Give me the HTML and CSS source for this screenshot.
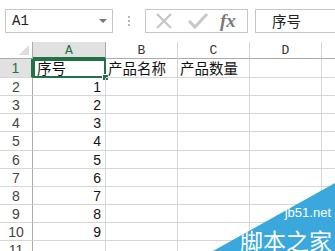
FILE: index.html
```html
<!DOCTYPE html>
<html>
<head>
<meta charset="utf-8">
<link rel="stylesheet" href="styles.css">
</head>
<body>
<div class="app">
  <div class="fbar">
    <div class="namebox"><span class="nb-text">A1</span><span class="nb-arrow"></span></div>
    <div class="dots"><i></i><i></i><i></i></div>
    <div class="btns">
      <svg class="ico" width="20" height="20" viewBox="0 0 20 20"><path d="M3 3 L17 17 M17 3 L3 17" stroke="#c8c8c8" stroke-width="2.4" fill="none"/></svg>
      <svg class="ico" width="22" height="20" viewBox="0 0 22 20"><path d="M2 10 L8 16 L20 3" stroke="#c8c8c8" stroke-width="3" fill="none"/></svg>
      <span class="fx">fx</span>
    </div>
    <div class="input">序号</div>
  </div>
  <div class="sheet">
    <div class="corner"><span class="tri"></span></div>
    <div class="ch sel">A</div>
    <div class="ch">B</div>
    <div class="ch">C</div>
    <div class="ch">D</div>
    <div class="ch last"></div>

    <div class="rh sel">1</div>
    <div class="c active">序号<span class="handle"></span></div>
    <div class="c">产品名称</div>
    <div class="c">产品数量</div>
    <div class="c"></div>
    <div class="c"></div>

    <div class="rh">2</div><div class="c n">1</div><div class="c"></div><div class="c"></div><div class="c"></div><div class="c"></div>
    <div class="rh">3</div><div class="c n">2</div><div class="c"></div><div class="c"></div><div class="c"></div><div class="c"></div>
    <div class="rh">4</div><div class="c n">3</div><div class="c"></div><div class="c"></div><div class="c"></div><div class="c"></div>
    <div class="rh">5</div><div class="c n">4</div><div class="c"></div><div class="c"></div><div class="c"></div><div class="c"></div>
    <div class="rh">6</div><div class="c n">5</div><div class="c"></div><div class="c"></div><div class="c"></div><div class="c"></div>
    <div class="rh">7</div><div class="c n">6</div><div class="c"></div><div class="c"></div><div class="c"></div><div class="c"></div>
    <div class="rh">8</div><div class="c n">7</div><div class="c"></div><div class="c"></div><div class="c"></div><div class="c"></div>
    <div class="rh">9</div><div class="c n">8</div><div class="c"></div><div class="c"></div><div class="c"></div><div class="c"></div>
    <div class="rh">10</div><div class="c n">9</div><div class="c"></div><div class="c"></div><div class="c"></div><div class="c"></div>
    <div class="rh">11</div><div class="c"></div><div class="c"></div><div class="c"></div><div class="c"></div><div class="c"></div>
  </div>
  <div class="wm">
    <div class="wm-url">jb51.net</div>
    <div class="wm-name">脚本之家</div>
  </div>
</div>
</body>
</html>
```
FILE: styles.css
```css
html, body {
  margin: 0;
  padding: 0;
  background: #fff;
  overflow: hidden;
}
.app {
  position: relative;
  width: 335px;
  height: 251px;
  overflow: hidden;
  font-family: "Noto Sans CJK SC", "Liberation Sans", sans-serif;
}
.fbar {
  display: flex;
  align-items: center;
  height: 42px;
  padding-left: 5px;
  box-sizing: border-box;
}
.namebox {
  width: 108px;
  height: 24px;
  box-sizing: border-box;
  border: 1px solid #c6c6c6;
  display: flex;
  align-items: center;
  justify-content: space-between;
  padding: 0 5px 0 6px;
}
.nb-text {
  font-family: "Liberation Mono", monospace;
  font-size: 14px;
  color: #222;
}
.nb-arrow {
  width: 0;
  height: 0;
  border-left: 4px solid transparent;
  border-right: 4px solid transparent;
  border-top: 4px solid #777;
}
.dots {
  width: 32px;
  display: flex;
  flex-direction: column;
  align-items: center;
  gap: 2px;
}
.dots i {
  display: block;
  width: 2px;
  height: 2px;
  background: #b8b8b8;
}
.btns {
  width: 103px;
  height: 24px;
  box-sizing: border-box;
  border: 1px solid #c6c6c6;
  display: flex;
  align-items: center;
  padding-left: 8px;
  gap: 13px;
}
.fx {
  font-family: "Liberation Serif", serif;
  font-style: italic;
  font-weight: bold;
  font-size: 19px;
  color: #7a7a7a;
  margin-left: -2px;
  line-height: 20px;
}
.input {
  margin-left: 7px;
  flex: 1;
  height: 24px;
  box-sizing: border-box;
  border: 1px solid #c6c6c6;
  border-right: none;
  padding-left: 16px;
  font-size: 14.5px;
  line-height: 22px;
  color: #222;
}
.sheet {
  display: grid;
  grid-template-columns: 33px 73px 72px 72px 72px 40px;
  grid-template-rows: 17px 19px 18px 18px 18px 19px 18px 18px 18px 18px 18px 18px;
}
.corner {
  border-right: 1px solid #ababab;
  border-bottom: 1px solid #ababab;
  position: relative;
}
.tri {
  position: absolute;
  right: 3px;
  bottom: 3px;
  width: 0;
  height: 0;
  border-left: 10px solid transparent;
  border-bottom: 10px solid #dcdcdc;
}
.ch {
  border-right: 1px solid #d6d6d6;
  border-bottom: 1px solid #ababab;
  font-family: "Liberation Mono", monospace;
  font-size: 13px;
  color: #333;
  text-align: center;
  line-height: 17px;
}
.ch.sel {
  background: #e1e1e1;
  color: #217346;
  border-bottom: 2px solid #217346;
  border-right-color: #ababab;
}
.rh {
  border-right: 1px solid #ababab;
  border-bottom: 1px solid #d6d6d6;
  font-family: "Liberation Sans", sans-serif;
  font-size: 14px;
  color: #444;
  text-align: center;
  line-height: 18px;
}
.rh.sel {
  background: #e1e1e1;
  color: #217346;
  border-right: 2px solid #217346;
}
.c {
  border-right: 1px solid #d6d6d6;
  border-bottom: 1px solid #d6d6d6;
  font-size: 14.5px;
  line-height: 18px;
  color: #111;
  padding-left: 2px;
  white-space: nowrap;
  overflow: visible;
  position: relative;
}
.c.n {
  text-align: right;
  padding: 0 4px 0 0;
  font-family: "Liberation Sans", sans-serif;
  font-size: 14px;
}
.c.active {
  outline: 2px solid #217346;
  outline-offset: -2px;
  padding-left: 4px;
}
.handle {
  position: absolute;
  right: -4px;
  bottom: -4px;
  width: 5px;
  height: 5px;
  background: #217346;
  border: 1px solid #fff;
}
.wm {
  position: absolute;
  right: 0;
  bottom: 0;
  width: 122px;
  height: 68px;
  background: #3aa7dd;
  clip-path: polygon(100% 0, 100% 100%, 0 100%);
}
.wm-url {
  position: absolute;
  right: 4px;
  top: 22px;
  font-family: "Liberation Sans", sans-serif;
  font-size: 13px;
  color: #fff;
}
.wm-name {
  position: absolute;
  right: 3px;
  bottom: -4px;
  font-size: 23px;
  line-height: 30px;
  color: #fff;
}
```
